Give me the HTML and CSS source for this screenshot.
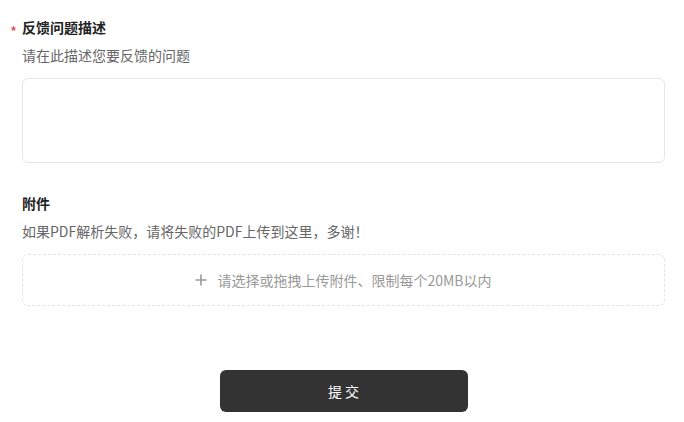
FILE: index.html
```html
<!DOCTYPE html>
<html lang="zh-CN">
<head>
    <meta charset="UTF-8">
    <meta name="viewport" content="width=device-width, initial-scale=1.0">
    <title>问题反馈</title>
    <link rel="stylesheet" href="styles.css">
</head>
<body>
    <div class="form">
        <!-- 问题描述 -->
        <div class="field">
            <div class="label required">反馈问题描述</div>
            <div class="hint">请在此描述您要反馈的问题</div>
            <textarea class="textarea"></textarea>
        </div>

        <!-- 附件 -->
        <div class="field attach">
            <div class="label">附件</div>
            <div class="hint">如果PDF解析失败，请将失败的PDF上传到这里，多谢！</div>
            <div class="upload">
                <svg class="plus" width="12" height="12" viewBox="0 0 12 12">
                    <path d="M6 0.5V11.5M0.5 6H11.5" stroke="#999" stroke-width="1.6" fill="none"/>
                </svg>
                <span>请选择或拖拽上传附件、限制每个20MB以内</span>
            </div>
        </div>

        <div class="actions">
            <button class="submit">提 交</button>
        </div>
    </div>
</body>
</html>
```

FILE: styles.css
```css
/* 通用 */
body {
    margin: 0;
    padding: 17px 19px 0 22px;
    font-family: "Noto Sans CJK SC", "Noto Sans", sans-serif;
    font-size: 14px;
    color: #333;
    background: #fff;
}

.field {
    display: flex;
    flex-direction: column;
}

.attach {
    margin-top: 30px;
}

/* 标题 */
.label {
    position: relative;
    line-height: 20px;
    font-weight: bold;
    color: #222;
}

.label.required::before {
    content: "*";
    position: absolute;
    left: -12px;
    top: 5px;
    color: #e5484d;
    font-size: 15px;
    font-weight: normal;
}

.hint {
    margin-top: 8px;
    line-height: 20px;
    color: #666;
}

/* 输入框 */
.textarea {
    margin-top: 13px;
    height: 85px;
    box-sizing: border-box;
    border: 1px solid #e6e6e6;
    border-radius: 6px;
    resize: none;
    outline: none;
    font-family: inherit;
}

/* 上传 */
.upload {
    margin-top: 13px;
    height: 52px;
    box-sizing: border-box;
    border: 1px dashed #e3e3e3;
    border-radius: 6px;
    display: flex;
    align-items: center;
    justify-content: center;
    gap: 10px;
    color: #999;
}

/* 按钮 */
.actions {
    display: flex;
    justify-content: center;
    margin-top: 64px;
}

.submit {
    width: 248px;
    height: 42px;
    border: none;
    border-radius: 6px;
    background: #333;
    color: #fff;
    font-family: inherit;
    font-size: 14px;
    cursor: pointer;
}
```
